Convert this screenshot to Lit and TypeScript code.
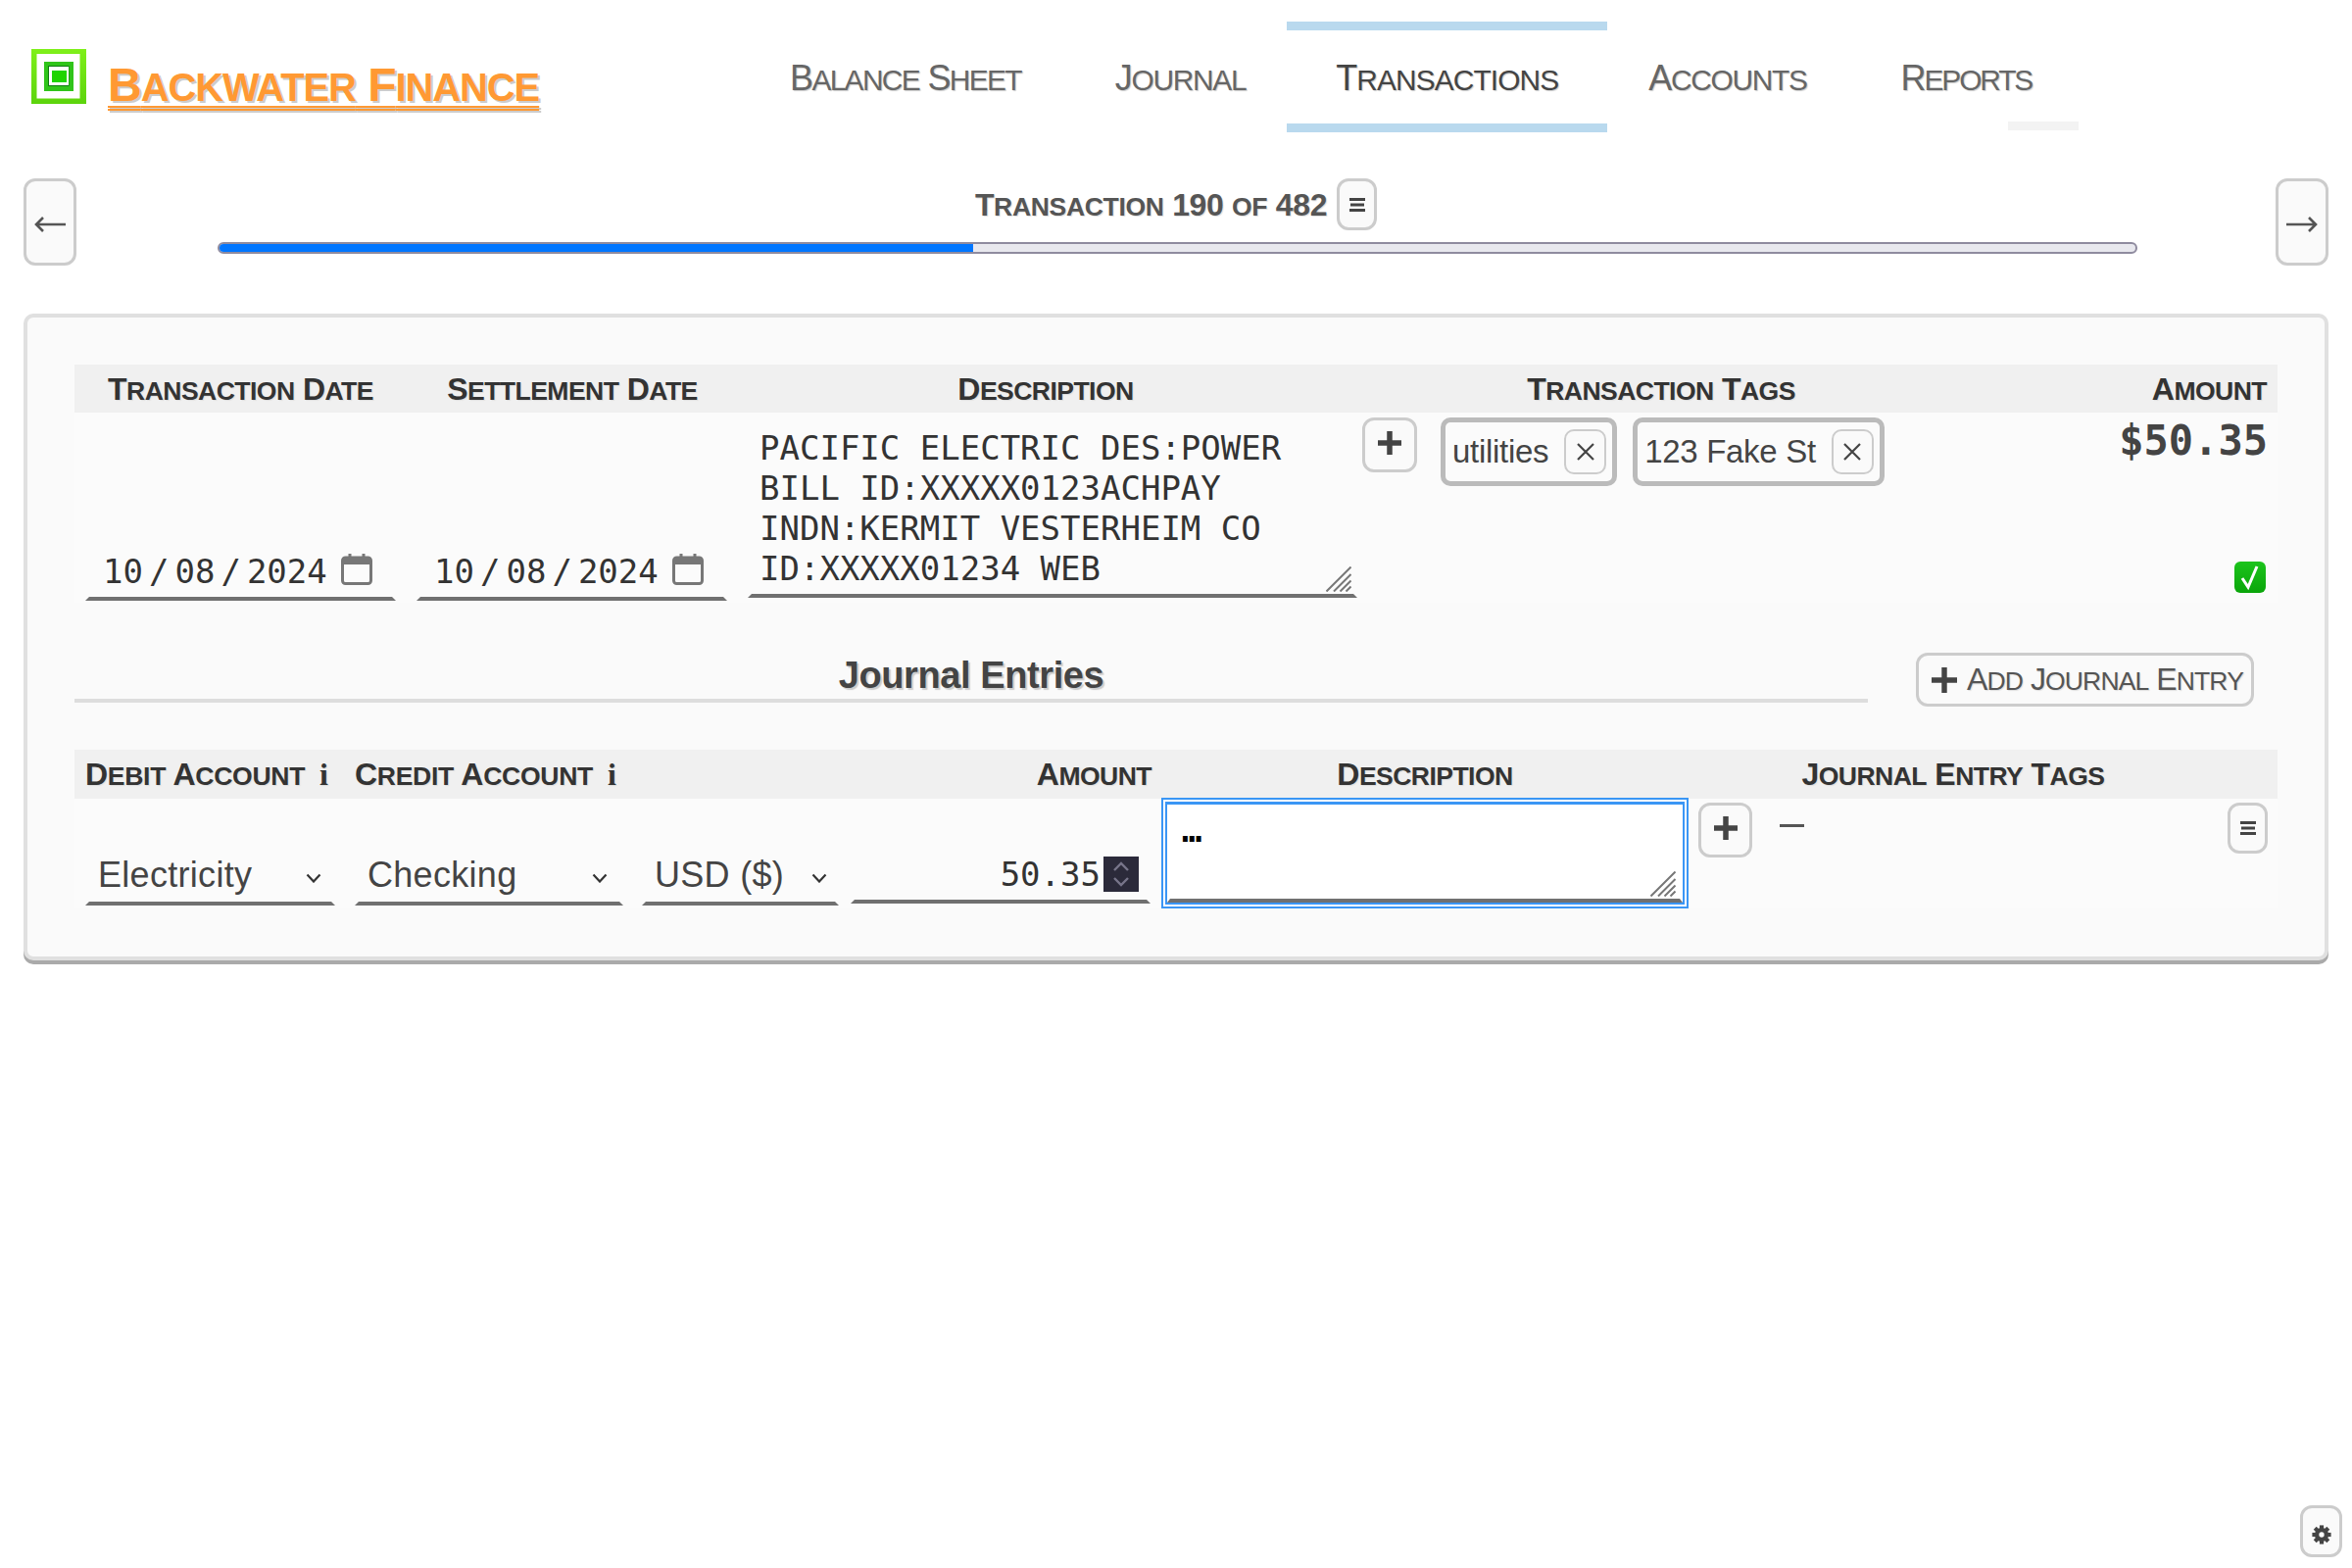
import { LitElement, html, css, svg } from "lit";
import { customElement } from "lit/decorators.js";

function sc(text: string) {
  const runs = text.match(/[a-z]+|[^a-z]+/g) || [];
  return runs.map((r) => (/^[a-z]/.test(r) ? html`<span class="sm">${r}</span>` : r));
}

const gripIcon = html`<svg class="grip" viewBox="0 0 26 26" width="26" height="26"><path d="M0.5 25.5 L25.5 0.5 M8 25.5 L25.5 8 M14.5 25.5 L25.5 14.5 M20.5 25.5 L25.5 20.5" stroke="#777" stroke-width="2" fill="none"/></svg>`;
const chevron = html`<svg class="chev" viewBox="0 0 16 10" width="16" height="10"><path d="M1.5 1.5 L8 8.5 L14.5 1.5" stroke="#333" stroke-width="2.2" fill="none"/></svg>`;
const calendar = html`<svg class="cal" viewBox="0 0 32 32" width="32" height="32"><path d="M9 0v5M23 0v5" stroke="#777" stroke-width="3"/><rect x="1.5" y="4" width="29" height="26.5" rx="3" fill="none" stroke="#777" stroke-width="3"/><rect x="1.5" y="4" width="29" height="7" fill="#777"/></svg>`;
const listIcon = html`<svg viewBox="0 0 16 14" width="16" height="14"><path d="M0 1.5H16M1 7H15M0 12.5H16" stroke="#444" stroke-width="3" fill="none"/></svg>`;
const plusIcon = html`<svg class="plusg" viewBox="0 0 24 24" width="24" height="24"><path d="M12 0V24M0 12H24" stroke="#444" stroke-width="5.5" fill="none"/></svg>`;
const closeIcon = html`<svg viewBox="0 0 20 20" width="20" height="20"><path d="M2 2L18 18M18 2L2 18" stroke="#444" stroke-width="2.2" fill="none"/></svg>`;

@customElement("app-root")
export class AppRoot extends LitElement {
  static styles = css`
    :host {
      display: block;
      min-height: 1600px;
      background: #fff;
      font-family: "Liberation Sans", Arial, sans-serif;
      color: #444;
      position: relative;
    }
    .sm { font-size: 0.83em; text-transform: uppercase; }
    .page { padding: 22px 24px 0; box-sizing: border-box; }

    .header { display: flex; height: 113px; align-items: flex-start; }
    .brand { display: flex; align-items: flex-start; width: 734px; flex: none; }
    .logo { margin: 28px 0 0 8px; flex: none; display: block; }
    .title {
      margin: 37px 0 0 22px;
      font-size: 48px;
      line-height: 56px;
      font-weight: 700;
      color: #f93;
      white-space: nowrap;
      letter-spacing: -1px;
      text-decoration: underline double #f93;
      text-decoration-thickness: 2px;
      text-underline-offset: 5px;
      text-shadow: 2px 2px 0 #ccc;
    }
    .nav { display: flex; }
    .nav a {
      display: block;
      height: 113px;
      box-sizing: border-box;
      padding: 27px 48px 0;
      font-size: 36px;
      line-height: 44px;
      color: #666;
      white-space: nowrap;
      text-shadow: 1px 1px 1px #ccc;
      border-top: 9px solid transparent;
      border-bottom: 9px solid transparent;
      letter-spacing: -1.3px;
    }
    .nav a.n1 { letter-spacing: -1.65px; }
    .nav a.n5 { letter-spacing: -2.1px; }
    .nav a.active { color: #444; border-color: #b9d9ee; padding-left: 50px; padding-right: 50px; margin: 0 -6px; letter-spacing: -0.9px; }
    .nav a.hover { position: relative; }
    .hoverbar { position: absolute; left: 157px; bottom: -7px; width: 72px; height: 9px; background: #f3f3f3; }

    .pager { display: flex; height: 89px; margin-top: 47px; }
    .navbtn {
      width: 54px;
      height: 89px;
      box-sizing: border-box;
      border: 3px solid #ccc;
      border-radius: 12px;
      background: #fafafa;
      display: flex;
      align-items: center;
      justify-content: center;
      flex: none;
    }
    .navbtn svg { display: block; margin-top: 4px; }
    .pmid { flex: 1; display: flex; flex-direction: column; align-items: center; }
    .ptitle { display: flex; height: 53px; align-items: flex-start; }
    .ptitle span.t {
      font-size: 32px;
      line-height: 38px;
      font-weight: 700;
      color: #555;
      margin: 8px 10px 0 0;
      white-space: nowrap;
      letter-spacing: -0.35px;
      text-shadow: 1px 1px 1px #ddd;
    }
    .btn {
      box-sizing: border-box;
      border: 3px solid #ccc;
      border-radius: 12px;
      background: #fafafa;
      display: flex;
      align-items: center;
      justify-content: center;
      flex: none;
      color: #555;
    }
    .mini { width: 41px; height: 53px; }
    .progress {
      margin-top: 12px;
      margin-left: 3px;
      width: 1959px;
      height: 12px;
      box-sizing: border-box;
      border: 2px solid #8f8b9f;
      border-radius: 6px;
      background: #e8e8ee;
      overflow: hidden;
      position: relative;
    }
    .bar { position: absolute; left: -2px; top: -2px; bottom: -2px; background: #0076ff; border-top: 2px solid #0068e0; border-bottom: 2px solid #0068e0; box-sizing: border-box; }

    .card {
      margin-top: 49px;
      height: 660px;
      box-sizing: border-box;
      padding: 48px 48px 0;
      border: 4px solid #e0e0e0;
      border-radius: 10px;
      background: #fafafa;
      box-shadow: 0 4px 0 #aaa;
    }
    .thead, .trow { display: grid; }
    .t1 { grid-template-columns: 339px 338px 637px 610px 324px; }
    .t2 { grid-template-columns: 276px 294px 216px 318px 548px 530px 66px; }
    .thead { background: #f0f0f0; }
    .thead.t1 { height: 49px; }
    .thead.t2 { height: 50px; }
    .th {
      font-size: 32px;
      line-height: 49px;
      padding-top: 1px;
      box-sizing: border-box;
      font-weight: 700;
      color: #333;
      text-align: center;
      white-space: nowrap;
      letter-spacing: -0.55px;
      text-shadow: 1px 1px 1px #ddd;
    }
    .th.right { text-align: right; padding-right: 11px; }
    .th.left { text-align: left; padding-left: 11px; letter-spacing: -0.3px; }
    .th.descpad { padding-right: 9px; }
    .th.amt2 { padding-right: 5px; }
    .th.left2 { text-align: left; padding-left: 10px; letter-spacing: -0.3px; }
    .th i { font-family: "Liberation Serif", serif; font-style: normal; margin-left: 15px; font-size: 32px; }
    .trow.t1 { height: 194px; background: #fbfbfb; }
    .trow.t2 { height: 112px; background: #fbfbfb; }
    .td { display: flex; min-width: 0; position: relative; }

    .field {
      border-bottom: 4px solid #707070;
      border-left: 4px solid transparent;
      border-right: 4px solid transparent;
      box-sizing: border-box;
      font-family: "DejaVu Sans Mono", monospace;
      font-size: 34px;
      color: #333;
      position: relative;
    }
    .date {
      margin: auto 0 2px 11px;
      width: 317px;
      height: 50px;
      display: flex;
      align-items: flex-start;
      padding-left: 14px;
      line-height: 40px;
      white-space: pre;
    }
    .d2 { margin-left: 10px; }
    .date .sl { margin: 0 6px; }
    .cal { margin: 2px 0 0 14px; flex: none; display: block; }
    .desc {
      margin: 0 0 5px 10px;
      width: 622px;
      align-self: flex-end;
      height: 185px;
      padding: 12px 0 0 8px;
      line-height: 41px;
      white-space: pre;
    }
    .grip { position: absolute; display: block; right: 2px; bottom: 2px; }
    .plus { width: 56px; height: 56px; margin: 5px 0 0 0; }
    .plusg { display: block; margin-top: -4px; }
    .tags { display: flex; gap: 16px; margin: 5px 0 0 24px; }
    .tag {
      height: 70px;
      box-sizing: border-box;
      border: 5px solid #bbb;
      border-radius: 10px;
      display: flex;
      align-items: center;
      padding-left: 7px;
      padding-right: 6px;
      font-size: 33px;
      letter-spacing: -0.3px;
      color: #444;
      white-space: nowrap;
    }
    .x { width: 43px; height: 46px; margin-left: 16px; border-width: 2px; border-radius: 10px; }
    .amountcell { flex-direction: column; align-items: flex-end; padding-right: 10px; justify-content: space-between; }
    .bigamt {
      font-family: "DejaVu Sans Mono", monospace;
      font-weight: 700;
      font-size: 42px;
      line-height: 48px;
      margin-top: 5px;
      color: #444;
    }
    .check { display: block; margin: 0 2px 10px 0; }

    .jhead { display: flex; margin-top: 51px; height: 55px; margin-bottom: 44px; }
    .jtitle {
      width: 1830px;
      height: 51px;
      box-sizing: border-box;
      border-bottom: 4px solid #ddd;
      text-align: center;
      font-size: 38px;
      line-height: 46px;
      font-weight: 700;
      color: #444;
      text-shadow: 2px 2px 1px #ccc;
      letter-spacing: -0.4px;
    }
    .addbtn {
      margin-left: 49px;
      width: 345px;
      height: 55px;
      font-size: 32px;
      white-space: nowrap;
      justify-content: flex-start;
      padding-left: 13px;
      gap: 10px;
      letter-spacing: -0.9px;
      text-shadow: 1px 1px 1px #ddd;
    }
    .addbtn svg { flex: none; display: block; }
    .sel {
      height: 50px;
      align-self: flex-start;
      margin-top: 59px;
      display: flex;
      font-family: "Liberation Sans", Arial, sans-serif;
      font-size: 36px;
      line-height: 38px;
      letter-spacing: 0.3px;
      justify-content: space-between;
      padding-left: 9px;
      white-space: nowrap;
      color: #444;
    }
    .chev { margin-top: 17px; flex: none; display: block; }
    .s1 { margin-left: 11px; width: 255px; padding-right: 10px; }
    .s2 { margin-left: 10px; width: 274px; padding-right: 12px; }
    .s3 { margin-left: 9px; width: 201px; padding-right: 8px; }
    .num {
      margin: 57px 0 0 6px;
      align-self: flex-start;
      width: 306px;
      height: 50px;
      display: flex;
      justify-content: flex-end;
      line-height: 40px;
      padding-right: 8px;
    }
    .spin { width: 36px; height: 36px; margin-left: 3px; background: #2b2a3a; display: block; flex: none; margin-top: 2px; }
    .focus {
      margin: -1px 0 0 5px;
      width: 538px;
      height: 113px;
      box-sizing: border-box;
      border: 2px solid #3a96f5;
      background: #fff;
      padding: 2px;
      position: relative;
    }
    .fin {
      width: 100%;
      height: 100%;
      box-sizing: border-box;
      border: 2px solid #3a96f5;
      border-top-width: 3px;
      position: relative;
    }
    .fin .field {
      position: absolute;
      inset: 0 0 0 0;
      border-left: 3px solid transparent;
      border-right: 3px solid transparent;
      border-bottom: 4px solid #707070;
      font-weight: 700;
      color: #000;
      line-height: 40px;
      padding: 6px 0 0 12px;
    }
    .fin .grip { right: 4px; }
    .plus2 { margin: 4px 0 0 5px; width: 55px; height: 56px; }
    .minus { width: 25px; height: 3px; background: #555; margin: 26px 0 0 28px; }
    .list2 { width: 41px; height: 52px; margin: 4px 0 0 15px; }
    .settings {
      position: fixed;
      left: 2347px;
      top: 1536px;
      width: 43px;
      height: 53px;
      padding-top: 7px;
    }
  `;

  render() {
    return html`
      <div class="page">
        <header class="header">
          <div class="brand">
            <svg class="logo" viewBox="0 0 56 56" width="56" height="56">
              <defs><linearGradient id="lg" x1="0" y1="0" x2="0" y2="1"><stop offset="0" stop-color="#7ff01a"/><stop offset="1" stop-color="#5cd40c"/></linearGradient></defs>
              <rect width="56" height="56" fill="url(#lg)"/>
              <rect x="5.5" y="5" width="44" height="45.5" fill="#fff"/>
              <rect x="13" y="13" width="30" height="30" fill="#30c41a"/>
              <rect x="17" y="17" width="21.5" height="21" fill="#0e7a10"/>
              <rect x="18" y="18" width="20" height="19" fill="#fff"/>
              <rect x="21" y="22" width="15" height="12" fill="#1fd400"/>
            </svg>
            <div class="title">${sc("Backwater Finance")}</div>
          </div>
          <nav class="nav">
            <a class="n1">${sc("Balance Sheet")}</a>
            <a>${sc("Journal")}</a>
            <a class="active">${sc("Transactions")}</a>
            <a>${sc("Accounts")}</a>
            <a class="hover n5">${sc("Reports")}<span class="hoverbar"></span></a>
          </nav>
        </header>

        <section class="pager">
          <div class="navbtn"><svg viewBox="0 0 32 20" width="32" height="20"><path d="M32 10H3M9 3L2 10L9 17" stroke="#555" stroke-width="2.6" fill="none"/></svg></div>
          <div class="pmid">
            <div class="ptitle">
              <span class="t">${sc("Transaction 190 of 482")}</span>
              <div class="btn mini">${listIcon}</div>
            </div>
            <div class="progress"><div class="bar" style="width:${(190 / 482) * 100}%"></div></div>
          </div>
          <div class="navbtn"><svg viewBox="0 0 32 20" width="32" height="20"><path d="M0 10H29M23 3L30 10L23 17" stroke="#555" stroke-width="2.6" fill="none"/></svg></div>
        </section>

        <main class="card">
          <div class="thead t1">
            <div class="th">${sc("Transaction Date")}</div>
            <div class="th">${sc("Settlement Date")}</div>
            <div class="th descpad">${sc("Description")}</div>
            <div class="th">${sc("Transaction Tags")}</div>
            <div class="th right">${sc("Amount")}</div>
          </div>
          <div class="trow t1">
            <div class="td"><div class="field date"><span>10</span><span class="sl">/</span><span>08</span><span class="sl">/</span><span>2024</span>${calendar}</div></div>
            <div class="td"><div class="field date d2"><span>10</span><span class="sl">/</span><span>08</span><span class="sl">/</span><span>2024</span>${calendar}</div></div>
            <div class="td"><div class="field desc">PACIFIC ELECTRIC DES:POWER
BILL ID:XXXXX0123ACHPAY
INDN:KERMIT VESTERHEIM CO
ID:XXXXX01234 WEB${gripIcon}</div></div>
            <div class="td">
              <div class="btn plus">${plusIcon}</div>
              <div class="tags">
                <div class="tag">utilities<div class="btn x">${closeIcon}</div></div>
                <div class="tag">123 Fake St<div class="btn x">${closeIcon}</div></div>
              </div>
            </div>
            <div class="td amountcell">
              <div class="bigamt">$50.35</div>
              <svg class="check" viewBox="0 0 32 32" width="32" height="32"><defs><linearGradient id="cg" x1="0" y1="0" x2="0" y2="1"><stop offset="0" stop-color="#1cc41c"/><stop offset="1" stop-color="#0aa50a"/></linearGradient></defs><rect width="32" height="32" rx="6" fill="url(#cg)"/><path d="M8 17L14 26L23 5" stroke="#fff" stroke-width="3" fill="none"/></svg>
            </div>
          </div>

          <div class="jhead">
            <div class="jtitle">Journal Entries</div>
            <div class="btn addbtn"><svg viewBox="0 0 24 24" width="26" height="26">
              <path d="M12 0V24M0 12H24" stroke="#444" stroke-width="5" fill="none"/></svg><span>${sc("Add Journal Entry")}</span></div>
          </div>

          <div class="thead t2">
            <div class="th left">${sc("Debit Account")}<i>i</i></div>
            <div class="th left2">${sc("Credit Account")}<i>i</i></div>
            <div class="th"></div>
            <div class="th right amt2">${sc("Amount")}</div>
            <div class="th">${sc("Description")}</div>
            <div class="th">${sc("Journal Entry Tags")}</div>
            <div class="th"></div>
          </div>
          <div class="trow t2">
            <div class="td"><div class="field sel s1">Electricity${chevron}</div></div>
            <div class="td"><div class="field sel s2">Checking${chevron}</div></div>
            <div class="td"><div class="field sel s3">USD ($)${chevron}</div></div>
            <div class="td"><div class="field num">50.35<svg class="spin" viewBox="0 0 36 36"><path d="M11 14L18 7L25 14M11 22L18 29L25 22" stroke="#77758a" stroke-width="2.4" fill="none"/></svg></div></div>
            <div class="td"><div class="focus"><div class="fin"><div class="field">…${gripIcon}</div></div></div></div>
            <div class="td">
              <div class="btn plus plus2">${plusIcon}</div>
              <div class="minus"></div>
            </div>
            <div class="td"><div class="btn list2">${listIcon}</div></div>
          </div>
        </main>
      </div>
      <div class="btn settings">
        <svg viewBox="0 0 24 24" width="20" height="20">
          <g fill="#444"><circle cx="12" cy="12" r="8.5"/>
          ${[0, 45, 90, 135, 180, 225, 270, 315].map((a) => svg`<rect x="9.5" y="0.5" width="5" height="6" transform="rotate(${a} 12 12)"/>`)}
          <circle cx="12" cy="12" r="3.2" fill="#fafafa"/></g>
        </svg>
      </div>
    `;
  }
}
